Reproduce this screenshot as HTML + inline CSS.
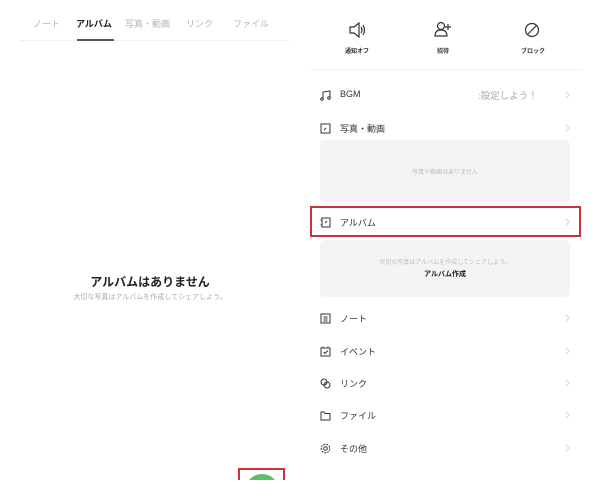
<!DOCTYPE html>
<html><head><meta charset="utf-8"><style>
*{margin:0;padding:0;box-sizing:border-box}
body{width:600px;height:500px;background:#fff;position:relative;overflow:hidden;font-family:"Liberation Sans","Noto Sans CJK JP",sans-serif;color:#222}
.a{position:absolute;white-space:nowrap}
.tab{font-size:9px;color:#b5b5b5;top:17px}
.lbl{font-size:6px;font-weight:bold;color:#333;top:46px;transform:translateX(-50%)}
.row{position:absolute;left:318px;width:254px;height:16px;font-size:9px;color:#333}
.row .t{position:absolute;left:22px;top:2px}
.row svg{position:absolute;left:2px;top:3px}
.row svg.c{left:auto;right:2px;top:4px}
.box{position:absolute;left:320px;width:250px;background:#f4f4f4;border-radius:5px}
</style></head><body>
<div class="a tab" style="left:33px">ノート</div>
<div class="a tab" style="left:76px;color:#222;font-weight:bold">アルバム</div>
<div class="a tab" style="left:125px">写真・動画</div>
<div class="a tab" style="left:186px">リンク</div>
<div class="a tab" style="left:233px">ファイル</div>
<div class="a" style="left:20px;top:40px;width:270px;height:1px;background:#f0f0f0"></div>
<div class="a" style="left:77px;top:39px;width:37px;height:2px;background:#555"></div>
<div class="a" style="left:0;width:300px;top:273px;text-align:center;font-size:12px;font-weight:bold;color:#222">アルバムはありません</div>
<div class="a" style="left:0;width:300px;top:292px;text-align:center;font-size:7px;color:#aaa">大切な写真はアルバムを作成してシェアしよう。</div>
<div class="a" style="left:0;top:0;width:600px;height:480px;overflow:hidden">
<div class="a" style="left:245px;top:474px;width:34px;height:34px;border-radius:50%;background:#5bbf6a"></div>
<div class="a" style="left:238px;top:468px;width:47px;height:40px;border:2px solid #c8323a"></div>
</div>

<svg class="a" style="left:348px;top:22px" width="18" height="16" viewBox="0 0 18 16" fill="none" stroke="#333" stroke-width="1.2"><path d="M2 5h4l5-4v14l-5-4H2z"/><path d="M13 5q2 3 0 6M15 3q3 5 0 10"/></svg>
<svg class="a" style="left:434px;top:21px" width="18" height="17" viewBox="0 0 18 17" fill="none" stroke="#333" stroke-width="1.2"><circle cx="7" cy="5" r="3.5"/><path d="M1 15q0-6 6-6t6 6z"/><path d="M14 3v6M11 6h6"/></svg>
<svg class="a" style="left:524px;top:22px" width="16" height="16" viewBox="0 0 16 16" fill="none" stroke="#333" stroke-width="1.2"><circle cx="8" cy="8" r="6.5"/><path d="M3.5 12.5l9-9"/></svg>
<div class="a lbl" style="left:357px">通知オフ</div>
<div class="a lbl" style="left:443px">招待</div>
<div class="a lbl" style="left:533px">ブロック</div>
<div class="a" style="left:311px;top:69px;width:270px;height:1px;background:#f0f0f0"></div>

<div class="row" style="top:87px"><svg width="11" height="11" viewBox="0 0 11 11" fill="none" stroke="#333" stroke-width="1"><path d="M3 9V2l7-1v7"/><circle cx="2" cy="9" r="1.3"/><circle cx="9" cy="8" r="1.3"/></svg><span class="t">BGM</span><span class="a" style="left:160px;top:1px;color:#aaa;font-size:9.5px">:設定しよう！</span><svg class="c" width="5" height="8" viewBox="0 0 5 8" fill="none" stroke="#ccc" stroke-width="0.8"><path d="M1 0.5l3 3.5-3 3.5"/></svg></div>
<div class="row" style="top:120px"><svg width="11" height="11" viewBox="0 0 11 11" fill="none" stroke="#333" stroke-width="1"><rect x="1" y="1" width="9" height="9"/><path d="M4 7l2-2"/></svg><span class="t">写真・動画</span><svg class="c" width="5" height="8" viewBox="0 0 5 8" fill="none" stroke="#ccc" stroke-width="0.8"><path d="M1 0.5l3 3.5-3 3.5"/></svg></div>
<div class="box" style="top:140px;height:62px"><div class="a" style="width:250px;top:27px;text-align:center;font-size:6px;color:#bbb">写真や動画はありません</div></div>
<div class="row" style="top:214px"><svg width="11" height="11" viewBox="0 0 11 11" fill="none" stroke="#333" stroke-width="1"><rect x="2" y="1" width="8" height="9"/><path d="M0.5 3h2M0.5 8h2M5 6l2-2"/></svg><span class="t">アルバム</span><svg class="c" width="5" height="8" viewBox="0 0 5 8" fill="none" stroke="#ccc" stroke-width="0.8"><path d="M1 0.5l3 3.5-3 3.5"/></svg></div>
<div class="a" style="left:310px;top:206px;width:271px;height:31px;border:2px solid #c8323a"></div>
<div class="box" style="top:240px;height:57px"><div class="a" style="width:250px;top:17px;text-align:center;font-size:6px;color:#bbb">大切な写真はアルバムを作成してシェアしよう。</div><div class="a" style="width:250px;top:29px;text-align:center;font-size:7px;font-weight:bold;color:#222">アルバム作成</div></div>
<div class="row" style="top:310px"><svg width="11" height="11" viewBox="0 0 11 11" fill="none" stroke="#333" stroke-width="1"><rect x="1" y="1" width="9" height="9"/><path d="M3.5 4h4M3.5 6h4M3.5 8h4"/></svg><span class="t">ノート</span><svg class="c" width="5" height="8" viewBox="0 0 5 8" fill="none" stroke="#ccc" stroke-width="0.8"><path d="M1 0.5l3 3.5-3 3.5"/></svg></div>
<div class="row" style="top:343px"><svg width="11" height="11" viewBox="0 0 11 11" fill="none" stroke="#333" stroke-width="1"><rect x="1" y="2" width="9" height="8"/><path d="M3 0.5v2M8 0.5v2M3.5 6l1.5 1.5 3-3"/></svg><span class="t">イベント</span><svg class="c" width="5" height="8" viewBox="0 0 5 8" fill="none" stroke="#ccc" stroke-width="0.8"><path d="M1 0.5l3 3.5-3 3.5"/></svg></div>
<div class="row" style="top:375px"><svg width="11" height="11" viewBox="0 0 11 11" fill="none" stroke="#333" stroke-width="1"><circle cx="4" cy="4" r="3"/><circle cx="7" cy="7" r="3"/></svg><span class="t">リンク</span><svg class="c" width="5" height="8" viewBox="0 0 5 8" fill="none" stroke="#ccc" stroke-width="0.8"><path d="M1 0.5l3 3.5-3 3.5"/></svg></div>
<div class="row" style="top:407px"><svg width="11" height="11" viewBox="0 0 11 11" fill="none" stroke="#333" stroke-width="1"><path d="M1 2h3l1 1.5h5V10H1z"/></svg><span class="t">ファイル</span><svg class="c" width="5" height="8" viewBox="0 0 5 8" fill="none" stroke="#ccc" stroke-width="0.8"><path d="M1 0.5l3 3.5-3 3.5"/></svg></div>
<div class="row" style="top:440px"><svg width="11" height="11" viewBox="0 0 11 11" fill="none" stroke="#333" stroke-width="1"><circle cx="5.5" cy="5.5" r="4.3" stroke-dasharray="2 1"/><circle cx="5.5" cy="5.5" r="1.8"/></svg><span class="t">その他</span><svg class="c" width="5" height="8" viewBox="0 0 5 8" fill="none" stroke="#ccc" stroke-width="0.8"><path d="M1 0.5l3 3.5-3 3.5"/></svg></div>
</body></html>
